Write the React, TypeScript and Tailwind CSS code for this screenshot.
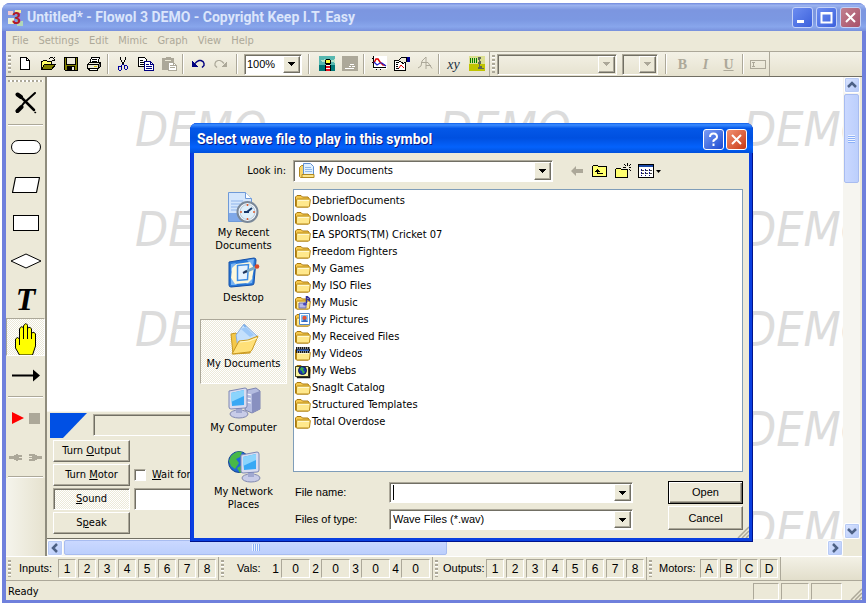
import { ReactNode, useState } from "react";
import clsx from "clsx";

const menus = ["File", "Settings", "Edit", "Mimic", "Graph", "View", "Help"];

const files = [
  { name: "DebriefDocuments", kind: "folder" },
  { name: "Downloads", kind: "folder" },
  { name: "EA SPORTS(TM) Cricket 07", kind: "folder" },
  { name: "Freedom Fighters", kind: "folder" },
  { name: "My Games", kind: "folder" },
  { name: "My ISO Files", kind: "folder" },
  { name: "My Music", kind: "music" },
  { name: "My Pictures", kind: "pictures" },
  { name: "My Received Files", kind: "folder" },
  { name: "My Videos", kind: "videos" },
  { name: "My Webs", kind: "webs" },
  { name: "SnagIt Catalog", kind: "folder" },
  { name: "Structured Templates", kind: "folder" },
  { name: "Total Overdose", kind: "folder" },
];

const digits = ["1", "2", "3", "4", "5", "6", "7", "8"];

const raised =
  "border border-t-white border-l-white border-r-[#716f64] border-b-[#716f64] shadow-[inset_-1px_-1px_0_#aca899] bg-[#ece9d8]";
const sunken =
  "border border-t-[#aca899] border-l-[#aca899] border-r-white border-b-white shadow-[inset_1px_1px_0_#716f64]";
const dither = "bg-[repeating-conic-gradient(#ffffff_0_25%,#ece9d8_0_50%)] bg-[length:2px_2px]";

/* ---------- small icons ---------- */

function Icon({ size = 16, children }: { size?: number; children: ReactNode }) {
  return (
    <svg width={size} height={size} viewBox={`0 0 ${size} ${size}`} shapeRendering="crispEdges" fill="none" aria-hidden="true">
      {children}
    </svg>
  );
}

const NewIcon = () => (
  <Icon>
    <path d="M3.5 1.5h6l3 3v9h-9z" fill="#fff" stroke="#000" />
    <path d="M9.5 1.5v3h3" stroke="#000" />
  </Icon>
);

const OpenIcon = () => (
  <Icon>
    <path d="M1.5 13.5v-8h1l1-1h3l1 1h4v3" fill="#ffff66" stroke="#000" />
    <path d="M1.5 13.5l3-5h11l-4 5z" fill="#808000" stroke="#000" />
    <path d="M9 2.5h1M10 1.5h3M13 2.5h1M14 3.5h1M12 4.5h3M14 1.5h1" stroke="#000" />
  </Icon>
);

const SaveIcon = () => (
  <Icon>
    <path d="M1.5 1.5h13v13h-12l-1-1z" fill="#808000" stroke="#000" />
    <path d="M4 2h8v6H4z" fill="#ece9d8" />
    <path d="M3.5 2v6.500h9V2" stroke="#000" />
    <path d="M4 10h8v4H4z" fill="#000" />
    <path d="M9 11h2v3H9z" fill="#ece9d8" />
  </Icon>
);

const PrintIcon = () => (
  <Icon>
    <path d="M5.500 1.500h8l-2 6h-8z" fill="#fff" stroke="#000" />
    <path d="M6 3.500h5M5.500 5.500h5" stroke="#000" />
    <path d="M1.500 8.500l2-2h11l-2 2z" fill="#ece9d8" stroke="#000" />
    <path d="M1.500 8.500h11v4h-11z" fill="#ece9d8" stroke="#000" />
    <path d="M12.500 8.500l2-2v4l-2 2" fill="#808080" stroke="#000" />
    <path d="M2.500 12.500h9v2h-8z" fill="#fff" stroke="#000" />
    <path d="M8 10.500h3" stroke="#d8c800" />
  </Icon>
);

const CutIcon = () => (
  <Icon>
    <path d="M5.500 1v3M6.500 4v2M7.500 6v2M10.500 1v3M9.500 4v2M8.500 6v2" stroke="#000" />
    <path d="M7 8.500h2M6.500 9v2M9.500 9v1" stroke="#000080" />
    <path d="M3.500 10.500h2l1 1v2l-1 1h-1l-1-1zM9.500 9.500h2l1 1v2l-1 1h-1l-1-1z" stroke="#0000a0" />
  </Icon>
);

const CopyIcon = () => (
  <Icon>
    <path d="M.5 1.500h6l2 2v7h-8z" fill="#fff" stroke="#000" />
    <path d="M2 4.500h3M2 6.500h4M2 8.500h4" stroke="#000" />
    <path d="M6.500 5.500h6l3 3v6h-9z" fill="#fff" stroke="#000080" />
    <path d="M12.500 5.500v3h3M8 8.500h3M8 10.500h6M8 12.500h6" stroke="#000080" />
  </Icon>
);

const PasteIcon = () => (
  <Icon>
    <path d="M1 2h3l1-1h4l1 1h3v5H7v7H1z" fill="#aca899" />
    <path d="M4 4.500h6" stroke="#ece9d8" />
    <path d="M7.500 6.500h5l3 3v5h-8z" fill="#fff" stroke="#aca899" />
    <path d="M9 9.500h3M9 11.500h5M12.500 7v2.500h3" stroke="#aca899" />
  </Icon>
);

const UndoIcon = () => (
  <Icon>
    <path d="M2 5v6h6z" fill="#000080" />
    <path d="M5 7.500l2-2 2-1h2l2 1 1 2v2l-2 2" stroke="#000080" strokeWidth="1.400" shapeRendering="auto" />
  </Icon>
);

const RedoIcon = () => (
  <Icon>
    <path d="M14 5v6H8z" fill="#aca899" />
    <path d="M11 7.500l-2-2-2-1H5l-2 1-1 2v2l2 2" stroke="#aca899" strokeWidth="1.200" shapeRendering="auto" />
  </Icon>
);

const LighthouseIcon = () => (
  <Icon>
    <path d="M0 0h16v9H0z" fill="#58b8b0" />
    <path d="M0 9h16v6H0z" fill="#007878" />
    <path d="M0 5l6-2v3zM16 3l-5 2 5 2z" fill="#b8e4c8" />
    <path d="M7 3h4v1h1v4h-1v1h1v6H6V9h1V8H6V4h1z" fill="#000" />
    <path d="M7 4h4v3H7z" fill="#ffff40" />
    <path d="M7 9h4v1H7zM7 12h4v1H7z" fill="#fff" />
    <path d="M7 10h4v2H7zM7 13h4v2H7z" fill="#e01020" />
  </Icon>
);

const MimicOffIcon = () => (
  <Icon>
    <path d="M0 0h16v15H0z" fill="#aca899" />
    <path d="M8 8.500h4M7 10.500h2M3 12.500h9M10 10.500h3" stroke="#fff" />
  </Icon>
);

const ChartIcon = () => (
  <Icon>
    <path d="M2 0h14v13H2z" fill="#fff" />
    <path d="M2.500 0v12M1 2.500h1M1 6.500h1M2 11.500h13M5 13.500h1M9 13.500h1" stroke="#000" />
    <path d="M3 7l2-4h2l2 3 3 3h2" stroke="#e00000" strokeWidth="1.500" shapeRendering="auto" />
    <path d="M3 6l3 3 3-2h2l4 3" stroke="#2020d0" strokeWidth="1.200" shapeRendering="auto" />
  </Icon>
);

const ChartSettingsIcon = () => (
  <Icon>
    <path d="M.5 4.500h11v10H.5z" fill="#fff" stroke="#000" />
    <path d="M2 6.500h3M2 8.500h2M2 10.500h2M2 12.500h3" stroke="#000" />
    <path d="M5 12l2-3 3 3" stroke="#e00000" shapeRendering="auto" />
    <path d="M4.500 4.500l3-3h5v4l-3 2-2-1z" fill="#ece9d8" stroke="#000" />
    <path d="M13 1h3v5h-3z" fill="#000090" />
  </Icon>
);

const CurveIcon = () => (
  <Icon>
    <path d="M1 12l3-2 1-5 4-4v12M4 6.500h7l4 6M9 9.500h5" stroke="#aca899" shapeRendering="auto" />
  </Icon>
);

const BeamIcon = () => (
  <Icon>
    <path d="M0 0h16v15H0z" fill="#c0c400" />
    <path d="M0 0h16v8H0z" fill="#dcdf90" />
    <path d="M1 2h1v5H1zM3 2h1v5H3zM5 2h1v5H5zM7 2h1v5H7z" fill="#008000" />
    <path d="M9 1h3v2h-1v2h1v3h-1v2h2v2h2v1h-6v-2h1V8H9V6h1V4H9z" fill="#606858" />
  </Icon>
);

const BoxIcon = () => (
  <Icon>
    <path d="M.5 4.500h15v8H.5z" stroke="#aca899" />
    <path d="M2 6.500h3M3.500 6v5M2 10.500h3" stroke="#aca899" />
  </Icon>
);

function FileIcon({ kind }: { kind: string }) {
  return (
    <svg width="16" height="16" viewBox="0 0 16 16" fill="none" className="shrink-0" aria-hidden="true">
      <path d="M.5 3L2 1.500h4l1.500 1.500h5.500l1 1.500v7.500l-1 1h-11.500l-1-1z" fill="#f5c84c" stroke="#a87810" />
      <path d="M2.500 5h12q1 0 .8 1l-.8 6q0 1-1 1h-11q-1 0-1-1V6q0-1 1-1z" fill="#ffe88c" stroke="#b88a18" />
      <path d="M3 6.500h11" stroke="#fff8d0" />
      {kind === "music" && (
        <>
          <path d="M4 7h7v5H4z" fill="#b8b8e8" stroke="#7070b0" />
          <path d="M11.500 7V0l3 2.500v2l-2-1.500" stroke="#303098" strokeWidth="1.500" />
          <ellipse cx="10" cy="8" rx="2" ry="1.500" fill="#4848b8" />
        </>
      )}
      {kind === "pictures" && (
        <>
          <path d="M4.500.5h10v11h-10z" fill="#fff" stroke="#5588c8" />
          <path d="M6 2h7v7H6z" fill="#7cc0f8" />
          <circle cx="9.500" cy="5" r="2.200" fill="#e85030" />
          <path d="M6 9l4-3 3 3z" fill="#3868c0" />
        </>
      )}
      {kind === "videos" && (
        <>
          <path d="M1 0h14v6H1z" fill="#181818" />
          <path d="M2 1h13M2 5h13" stroke="#fff" strokeDasharray="1 1" />
          <path d="M2 2.500h12v1.500H2z" fill="#3868c8" />
        </>
      )}
      {kind === "webs" && (
        <>
          <path d="M.5 2.500h13v10H.5z" fill="#f8f4a0" stroke="#404020" />
          <path d="M14.500 3v10.500H2" stroke="#181818" strokeWidth="1.500" />
          <circle cx="7.500" cy="6.500" r="4" fill="#1838b0" stroke="#101858" />
          <path d="M6 3l3 1-1 2 2 2-2 2-1-3-2-1z" fill="#38b048" />
        </>
      )}
    </svg>
  );
}

/* ---------- places bar icons ---------- */

const RecentIcon = () => (
  <svg width="32" height="32" viewBox="0 0 32 32" fill="none" aria-hidden="true">
    <path d="M.5.5h17l6 6v23H.5z" fill="#d4e6fc" stroke="#6f9ad8" />
    <path d="M1 21h15v8H1z" fill="#7fa8e8" />
    <path d="M17.500.5v6h6" fill="#fff" stroke="#6f9ad8" />
    <path d="M3 9h12M3 12h9M3 15h7M3 18h6" stroke="#8fb4ea" />
    <circle cx="19.500" cy="20" r="10" fill="#f4f8fc" stroke="#7a8898" strokeWidth="2" />
    <circle cx="19.500" cy="20" r="7.500" fill="#e0f0fa" stroke="#b8c8d8" />
    <path d="M19 20l5-4M16 20h5" stroke="#183868" strokeWidth="2" />
    <path d="M19.500 12v2M19.500 26v2M12 20h2M25 20h2" stroke="#e06030" strokeWidth="1.500" />
  </svg>
);

const DesktopIcon = () => (
  <svg width="32" height="32" viewBox="0 0 32 32" fill="none" aria-hidden="true">
    <path d="M1 5L26 1q2 0 2 2l-2 23q0 2-2 2L3 30q-2 0-2-2z" fill="#2878d8" stroke="#1450a8" />
    <path d="M3 7l5-1-5 9zM19 3l7-1-1 8zM3 21l6 7H3zM25 20l-1 6-6 1z" fill="#78b4f4" />
    <path d="M8 7l14-2 4 6-2 11-4 4-13 1-4-6 1-10z" fill="#fdf8dc" />
    <path d="M9.500 8.500l11-1-1 15-10 1z" fill="#e4f2ff" stroke="#3c8ce4" strokeWidth="1.500" />
    <path d="M17 15l11-5" stroke="#78a8c8" strokeWidth="3" />
    <path d="M15 16l4-2" stroke="#203860" strokeWidth="2" />
    <circle cx="29" cy="9.500" r="2.300" fill="#d84828" />
  </svg>
);

const DocumentsIcon = () => (
  <svg width="32" height="32" viewBox="0 0 32 32" fill="none" aria-hidden="true">
    <path d="M3 11l5-1 3 3 13 6-2 11-17 1z" fill="#f4c848" stroke="#c89820" />
    <path d="M8 12L16 1l13 12-9 10-10 2z" fill="#c4e0fc" stroke="#8cb0e0" />
    <path d="M13 6l5-2 8 8-4 2z" fill="#9cc8f8" />
    <path d="M15 2l2 2 1-1z" fill="#3888e0" />
    <path d="M4 31l7-13 9-1 10-4-6 14q-1 2-3 2z" fill="#ffe078" stroke="#c89820" />
    <path d="M12 19l9-1 8-3" stroke="#fff8c8" />
  </svg>
);

const MonitorArt = () => (
  <>
    <ellipse cx="12" cy="27" rx="9" ry="4" fill="#c8cce8" stroke="#8088b0" />
    <path d="M9 20h6v6H9z" fill="#a0a8d0" />
    <path d="M2 4l16-3q2 0 2 2v16q0 2-2 2L4 22q-2 0-2-2z" fill="#d8dcf0" stroke="#7c86b4" />
    <path d="M4 6l13-3v15L5 19z" fill="#38a8f4" />
    <path d="M4 6l13-3v6L4 15z" fill="#8cd4fc" />
  </>
);

const ComputerIcon = () => (
  <svg width="34" height="32" viewBox="0 0 34 32" fill="none" aria-hidden="true">
    <path d="M20 3l9-2 4 3v18l-8 4-7-3z" fill="#b4bce0" stroke="#7c84b0" />
    <path d="M25 7l8-3v18l-8 4z" fill="#8890c0" />
    <path d="M20 7l4 1M20 11l4 1M20 15l4 1" stroke="#fff" />
    <MonitorArt />
  </svg>
);

const NetworkIcon = () => (
  <svg width="34" height="32" viewBox="0 0 34 32" fill="none" aria-hidden="true">
    <circle cx="12" cy="11" r="10.500" fill="#2068d8" stroke="#184890" />
    <path d="M4 5q6-6 11-4l-2 5-4 2 3 4-4 6-4-3-2-5zM10 17l5-3 2 5-4 3z" fill="#48b848" />
    <g transform="translate(12 0)">
      <MonitorArt />
    </g>
  </svg>
);

/* ---------- shared controls ---------- */

function ToolButton({ label, children }: { label: string; children: ReactNode }) {
  return (
    <button aria-label={label} className="flex h-[22px] w-[23px] shrink-0 items-center justify-center">
      {children}
    </button>
  );
}

function Sep() {
  return (
    <div className="flex w-[6px] shrink-0 justify-center self-stretch py-[2px]">
      <div className="w-[2px] border-l border-[#aca899] bg-white" />
    </div>
  );
}

function Grip() {
  return <div className="mx-[2px] my-[3px] w-[3px] shrink-0 self-stretch bg-[repeating-linear-gradient(#aca899_0_2px,#fff_2px_3px,#ece9d8_3px_4px)]" />;
}

function Arrow({ disabled }: { disabled?: boolean }) {
  return (
    <span className={clsx("pointer-events-none flex w-[17px] shrink-0 items-center justify-center", raised)}>
      <svg width="7" height="4" viewBox="0 0 7 4" shapeRendering="crispEdges" aria-hidden="true">
        <path d="M0 0h7L3.500 4z" fill={disabled ? "#aca899" : "#000"} />
      </svg>
    </span>
  );
}

function CaptionButton({ label, tone, children }: { label: string; tone: string; children: ReactNode }) {
  return (
    <button aria-label={label} className={clsx("flex size-[21px] items-center justify-center rounded-[3px] border", tone)}>
      <svg width="17" height="17" viewBox="0 0 17 17" fill="none" stroke="#fff" strokeWidth="2" aria-hidden="true">
        {children}
      </svg>
    </button>
  );
}

function Cell({ children, wide }: { children: ReactNode; wide?: boolean }) {
  return (
    <span
      className={clsx(
        "flex h-[19px] items-center justify-center border border-b-white border-l-[#aca899] border-r-white border-t-[#aca899]",
        wide ? "w-[29px]" : "w-[18px]"
      )}
    >
      {children}
    </span>
  );
}

function ScrollButton({ label, d }: { label: string; d: string }) {
  return (
    <button
      aria-label={label}
      className="flex size-[16px] shrink-0 items-center justify-center rounded-[2px] border border-white bg-gradient-to-br from-[#dbe5ff] to-[#b4c8f8] shadow-[inset_0_0_0_1px_#b8cbf6]"
    >
      <svg width="10" height="10" viewBox="0 0 10 10" fill="none" stroke="#4d6185" strokeWidth="2.500" aria-hidden="true">
        <path d={d} />
      </svg>
    </button>
  );
}

/* ---------- main window pieces ---------- */

function Toolbar() {
  return (
    <div className="flex h-[26px] shrink-0 items-center border-b border-t border-b-[#716f64] border-t-[#aca899] bg-gradient-to-b from-[#f3f1e6] to-[#e6e2cf]">
      <Grip />
      <ToolButton label="New"><NewIcon /></ToolButton>
      <ToolButton label="Open"><OpenIcon /></ToolButton>
      <ToolButton label="Save"><SaveIcon /></ToolButton>
      <ToolButton label="Print"><PrintIcon /></ToolButton>
      <Sep />
      <ToolButton label="Cut"><CutIcon /></ToolButton>
      <ToolButton label="Copy"><CopyIcon /></ToolButton>
      <ToolButton label="Paste"><PasteIcon /></ToolButton>
      <Sep />
      <ToolButton label="Undo"><UndoIcon /></ToolButton>
      <ToolButton label="Redo"><RedoIcon /></ToolButton>
      <div className="w-[2px] shrink-0" />
      <Sep />
      <div className={clsx("mx-[4px] flex h-[21px] w-[58px] shrink-0 bg-white p-px", sunken)}>
        <select aria-label="Zoom" className="min-w-0 flex-1 appearance-none pl-px font-['Liberation_Sans',sans-serif] text-[11px]">
          <option>100%</option>
        </select>
        <Arrow />
      </div>
      <Sep />
      <div className="w-[3px] shrink-0" />
      <ToolButton label="Show mimic"><LighthouseIcon /></ToolButton>
      <ToolButton label="Hide mimic"><MimicOffIcon /></ToolButton>
      <Sep />
      <ToolButton label="Graph"><ChartIcon /></ToolButton>
      <ToolButton label="Graph settings"><ChartSettingsIcon /></ToolButton>
      <ToolButton label="Curve"><CurveIcon /></ToolButton>
      <Sep />
      <ToolButton label="Variables">
        <span className="font-['Liberation_Serif',serif] text-[14px] italic text-[#203040]">xy</span>
      </ToolButton>
      <ToolButton label="Signals"><BeamIcon /></ToolButton>
      <div className="ml-px w-px self-stretch bg-[#aca899]" />
      <Grip />
      <div className={clsx("flex h-[21px] w-[120px] shrink-0 p-px", sunken)}>
        <select aria-label="Font" disabled className="min-w-0 flex-1 appearance-none" />
        <Arrow disabled />
      </div>
      <div className={clsx("ml-[5px] flex h-[21px] w-[36px] shrink-0 p-px", sunken)}>
        <select aria-label="Font size" disabled className="min-w-0 flex-1 appearance-none" />
        <Arrow disabled />
      </div>
      <div className="w-[5px] shrink-0" />
      <Sep />
      <div className="flex pl-[2px] font-['Liberation_Serif',serif] text-[14px] font-bold text-[#aca899]">
        <ToolButton label="Bold">B</ToolButton>
        <ToolButton label="Italic"><i>I</i></ToolButton>
        <ToolButton label="Underline"><u>U</u></ToolButton>
      </div>
      <Sep />
      <ToolButton label="Text box"><BoxIcon /></ToolButton>
      <div className="w-px self-stretch bg-[#aca899]" />
    </div>
  );
}

function SideTool({ label, active, children }: { label: string; active?: boolean; children: ReactNode }) {
  return (
    <button
      aria-label={label}
      className={clsx(
        "flex h-[38px] w-full shrink-0 justify-center border",
        active
          ? clsx("items-end border-b-white border-l-[#aca899] border-r-white border-t-[#aca899]", dither)
          : "items-center border-transparent"
      )}
    >
      {children}
    </button>
  );
}

function SideTools() {
  return (
    <div className="flex w-[41px] shrink-0 flex-col border-r-2 border-[#8f8c7d] bg-[#ece9d8]">
      <div className="mx-[2px] mt-[3px] h-[2px] shrink-0 bg-[repeating-linear-gradient(90deg,#aca899_0_2px,#fff_2px_4px)]" />
      <div className="flex h-[42px] shrink-0 items-center justify-center">
        <svg width="22" height="22" viewBox="0 0 22 22" fill="none" stroke="#000" strokeLinecap="round" aria-hidden="true">
          <path d="M2.500 2.500L6 5" strokeWidth="4" />
          <path d="M4 3l12 12 3 3" strokeWidth="2.500" />
          <path d="M20 1L9 11l-7 9" strokeWidth="2" />
          <path d="M2.500 19l4-4" strokeWidth="4" />
          <path d="M20 20.500h.5" strokeWidth="1.500" />
        </svg>
      </div>
      <div className="mx-[2px] mb-[2px] h-[2px] shrink-0 border-t border-[#aca899] bg-white" />
      <SideTool label="Start or stop">
        <svg width="32" height="16" viewBox="0 0 32 16" aria-hidden="true"><rect x="1.500" y="1.500" width="29" height="13" rx="6.500" fill="#fff" stroke="#000" /></svg>
      </SideTool>
      <SideTool label="Output">
        <svg width="30" height="18" viewBox="0 0 30 18" aria-hidden="true"><path d="M4.500 1.500h24l-3 15h-24z" fill="#fff" stroke="#000" strokeWidth="1.200" strokeLinejoin="round" /></svg>
      </SideTool>
      <SideTool label="Process">
        <svg width="28" height="18" viewBox="0 0 28 18" aria-hidden="true"><rect x="1.500" y="1.500" width="25" height="15" fill="#fff" stroke="#000" /></svg>
      </SideTool>
      <SideTool label="Decision">
        <svg width="32" height="16" viewBox="0 0 32 16" aria-hidden="true"><path d="M1 8L16 1l15 7-15 7z" fill="#fff" stroke="#000" /></svg>
      </SideTool>
      <SideTool label="Text">
        <span className="font-['Liberation_Serif',serif] text-[32px] font-bold italic leading-none text-black">T</span>
      </SideTool>
      <SideTool label="Move" active>
        <svg width="24" height="33" viewBox="0 0 24 33" aria-hidden="true">
          <path
            d="M5.500 33L1.500 26V17q2-3 4 0v3V7q2-4 4-1V4q2-4 4-1 0 0 0 3 3-2 4 1v4q3-2 4 1v12l-3 9z"
            fill="#ff0"
            stroke="#000"
          />
          <path d="M9.500 6v11M13.500 5v12M17.500 9v8M5.500 19v4" stroke="#000" />
        </svg>
      </SideTool>
      <SideTool label="Connect">
        <svg width="30" height="13" viewBox="0 0 30 13" aria-hidden="true"><path d="M1 5.500h21v-5l7 6-7 6v-5H1z" /></svg>
      </SideTool>
      <div className="mx-[2px] mt-[2px] h-[2px] shrink-0 border-t border-[#aca899] bg-white" />
      <div className="flex h-[40px] shrink-0 items-center justify-center gap-[5px]">
        <button aria-label="Run">
          <svg width="12" height="12" viewBox="0 0 12 12" aria-hidden="true"><path d="M0 0l12 6-12 6z" fill="#f00" /></svg>
        </button>
        <button aria-label="Stop" className="size-[11px] bg-[#aca899]" />
      </div>
      <div className="flex h-[38px] shrink-0 items-center justify-center gap-[5px]">
        <button aria-label="Connect interface">
          <svg width="14" height="9" viewBox="0 0 14 9" shapeRendering="crispEdges" aria-hidden="true"><path d="M0 3h5V2h2V1h2v1h4v2h-3v1h3v2H9v1H7V7H5V6H0z" fill="#aca899" /></svg>
        </button>
        <button aria-label="Disconnect interface">
          <svg width="14" height="9" viewBox="0 0 14 9" shapeRendering="crispEdges" aria-hidden="true"><path d="M1 1h6v1h2v1h5v3H9v1H7v1H1V6h3V5H1V4h3V3H1z" fill="#aca899" /></svg>
        </button>
      </div>
      <div className="mx-[2px] h-[2px] shrink-0 border-t border-[#aca899] bg-white" />
      <div className="flex-1 bg-gradient-to-r from-[#f5f4ec] to-[#e6e2cf]" />
    </div>
  );
}

function SymbolPanel() {
  const [wait, setWait] = useState(false);
  const button = "h-[22px] w-[77px] text-center text-black";
  return (
    <div className="absolute bottom-0 left-0 flex h-[128px] w-[640px] max-w-[85%] flex-col border-b border-t border-b-[#716f64] border-t-[#f8f7f0] bg-[#ece9d8]">
      <div className="flex h-[28px] shrink-0 items-start gap-[5px] pl-[3px] pt-px">
        <svg width="38" height="25" viewBox="0 0 38 25" aria-hidden="true"><path d="M0 0h37L13 25H0z" fill="#0050e4" /></svg>
        <div className={clsx("mt-px h-[22px] flex-1", sunken)} />
      </div>
      <div className="flex gap-[4px] pl-[6px]">
        <div className="flex flex-col gap-[2px]">
          <button className={clsx(button, raised)}>Turn <u>O</u>utput</button>
          <button className={clsx(button, raised)}>Turn <u>M</u>otor</button>
          <button className={clsx(button, sunken, dither)}><u>S</u>ound</button>
          <button className={clsx(button, raised)}>S<u>p</u>eak</button>
        </div>
        <div className="flex flex-1 flex-col gap-[2px] pt-[24px]">
          <label className="flex h-[22px] items-center gap-[6px] whitespace-nowrap">
            <input
              type="checkbox"
              checked={wait}
              onChange={(e) => setWait(e.target.checked)}
              className={clsx("size-[12px] appearance-none bg-white checked:bg-[#808080]", sunken)}
            />
            <span><u>W</u>ait for sound</span>
          </label>
          <input aria-label="Sound file" className={clsx("h-[22px] w-full bg-white", sunken)} />
        </div>
      </div>
    </div>
  );
}

function Workspace() {
  return (
    <div className="flex min-h-0 min-w-0 flex-1 flex-col">
      <div className="flex min-h-0 flex-1">
        <div className="relative min-w-0 flex-1 overflow-hidden bg-white">
          <div className="grid auto-rows-[100px] grid-cols-[304px_304px_304px] pl-[88px] pt-[24px] text-[48px] italic leading-[56px] text-[#dcdcdc]">
            {Array.from({ length: 15 }, (_, i) => (
              <span key={i}>DEMO</span>
            ))}
          </div>
          <SymbolPanel />
        </div>
        <div className="flex w-[17px] shrink-0 flex-col items-center bg-[#f6f5f0]">
          <ScrollButton label="Scroll up" d="M1 7l4-4 4 4" />
          <div className="mt-px flex h-[89px] w-[15px] flex-col items-center justify-center rounded-[2px] border border-[#a8bcf0] bg-gradient-to-r from-[#cad8ff] to-[#bccffc]">
            <div className="h-[8px] w-[7px] bg-[repeating-linear-gradient(#eef4ff_0_1px,#8cb0f8_1px_2px)]" />
          </div>
          <div className="flex-1" />
          <ScrollButton label="Scroll down" d="M1 3l4 4 4-4" />
        </div>
        <div className="w-[2px] shrink-0 bg-[#ece9d8]" />
      </div>
      <div className="flex h-[17px] shrink-0 items-center bg-[#f6f5f0]">
        <ScrollButton label="Scroll left" d="M7 1L3 5l4 4" />
        <div className="ml-px flex h-[15px] w-[47%] items-center justify-center rounded-[2px] border border-[#a8bcf0] bg-gradient-to-b from-[#cad8ff] to-[#bccffc]">
          <div className="h-[7px] w-[8px] bg-[repeating-linear-gradient(90deg,#eef4ff_0_1px,#8cb0f8_1px_2px)]" />
        </div>
        <div className="flex-1" />
        <ScrollButton label="Scroll right" d="M3 1l4 4-4 4" />
        <div className="h-full w-[19px] bg-[#ece9d8]" />
      </div>
    </div>
  );
}

function PortBar() {
  return (
    <div className="flex h-[25px] shrink-0 items-center border-b border-t border-b-[#aca899] border-t-white bg-[#ece9d8] font-['Liberation_Sans',sans-serif] text-[11px]">
      <Grip />
      <span className="w-[45px] shrink-0 pl-[6px]">Inputs:</span>
      <div className="flex gap-[2px] text-[12px]">
        {digits.map((d) => <Cell key={d}>{d}</Cell>)}
      </div>
      <div className="ml-[2px] w-px self-stretch bg-[#aca899]" />
      <Grip />
      <span className="w-[44px] shrink-0 pl-[11px]">Vals:</span>
      <div className="flex text-[12px]">
        {digits.slice(0, 4).map((d) => (
          <span key={d} className="flex items-center">
            <span className="w-[11px] pr-[2px] text-right">{d}</span>
            <Cell wide>0</Cell>
          </span>
        ))}
      </div>
      <div className="ml-[2px] w-px self-stretch bg-[#aca899]" />
      <Grip />
      <span className="w-[45px] shrink-0 pl-[3px]">Outputs:</span>
      <div className="flex gap-[2px] pl-px text-[12px]">
        {digits.map((d) => <Cell key={d}>{d}</Cell>)}
      </div>
      <div className="ml-[2px] w-px self-stretch bg-[#aca899]" />
      <Grip />
      <span className="w-[46px] shrink-0 pl-[5px]">Motors:</span>
      <div className="flex gap-[2px] text-[12px]">
        {["A", "B", "C", "D"].map((d) => <Cell key={d}>{d}</Cell>)}
      </div>
      <div className="ml-[2px] w-px self-stretch bg-[#aca899]" />
      <div className="flex-1 self-stretch bg-gradient-to-b from-[#f3f1e6] to-[#e2decb]" />
    </div>
  );
}

function ResizeGrip() {
  return (
    <svg width="12" height="12" viewBox="0 0 12 12" fill="none" stroke="#aca899" strokeWidth="1.500" aria-hidden="true">
      <path d="M1 12L12 1M5 12l7-7M9 12l3-3" />
    </svg>
  );
}

function StatusBar() {
  const box = "h-[17px] border border-b-white border-l-[#aca899] border-r-white border-t-[#aca899]";
  return (
    <div className="flex h-[19px] shrink-0 items-end gap-[2px] bg-[#ece9d8] pl-[2px]">
      <span className="flex-1">Ready</span>
      <span className={clsx(box, "w-[26px]")} />
      <span className={clsx(box, "w-[28px]")} />
      <span className={clsx(box, "w-[31px]")} />
      <span className="flex w-[18px] justify-end"><ResizeGrip /></span>
    </div>
  );
}

/* ---------- dialog ---------- */

function Place({ label, active, className, children }: { label: string; active?: boolean; className: string; children: ReactNode }) {
  return (
    <button
      className={clsx(
        "flex w-full flex-col items-center border text-center leading-[13px]",
        active ? clsx("border-b-white border-l-[#aca899] border-r-white border-t-[#aca899]", dither) : "border-transparent",
        className
      )}
    >
      {children}
      <span className="mt-[2px] whitespace-pre-line">{label}</span>
    </button>
  );
}

function OpenDialog() {
  const [fileName, setFileName] = useState("");
  return (
    <div
      role="dialog"
      aria-label="Select wave file to play in this symbol"
      className="absolute left-[188px] top-[120px] flex h-[419px] w-[563px] flex-col rounded-t-[7px] bg-[#0a3fe0] px-[4px] pb-[4px] shadow-[inset_-1px_-1px_0_#00138c,inset_1px_0_0_#0831d9]"
    >
      <div className="-mx-[4px] flex h-[30px] shrink-0 items-center justify-between rounded-t-[7px] bg-[linear-gradient(#0a5ce8_0%,#3c8cff_6%,#0458e8_18%,#0050e0_50%,#0462fc_80%,#0050dc_100%)] pl-[7px] pr-[6px] pt-[3px]">
        <span className="font-['Roboto',sans-serif] text-[14px] font-bold text-white [text-shadow:1px_1px_0_#0a1883]">
          Select wave file to play in this symbol
        </span>
        <div className="flex gap-[2px]">
          <CaptionButton label="Help" tone="border-white bg-gradient-to-br from-[#7c9cf4] to-[#1c48d0]">
            <path d="M5 6q0-3.500 3.500-3.500T12 6q0 1.500-2 2.500T8.500 11M8.500 12.500v2.500" />
          </CaptionButton>
          <CaptionButton label="Close" tone="border-white bg-gradient-to-br from-[#f09070] to-[#c83408]">
            <path d="M4 4l9 9M13 4l-9 9" />
          </CaptionButton>
        </div>
      </div>

      <div className="flex min-h-0 flex-1 flex-col bg-[#ece9d8]">
        {/* Look in */}
        <div className="flex h-[36px] shrink-0 items-center">
          <label htmlFor="look-in" className="w-[99px] pr-[7px] text-right">Look in:</label>
          <div className={clsx("flex h-[22px] w-[260px] bg-white p-px", sunken)}>
            <span className="flex w-[24px] items-center justify-center">
              <svg width="16" height="16" viewBox="0 0 16 16" fill="none" aria-hidden="true">
                <path d="M.5 4.500l2-2h3v12h-4l-1-1z" fill="#f8d468" stroke="#b08820" />
                <path d="M4.500.5h7l3 3v9h-10z" fill="#e0f0ff" stroke="#6090d0" />
                <path d="M6 4.500h6M6 6.500h7M6 8.500h7" stroke="#90b8e8" />
                <path d="M3 11.500h12v3H3z" fill="#fce488" stroke="#b08820" />
              </svg>
            </span>
            <select id="look-in" className="min-w-0 flex-1 appearance-none">
              <option>My Documents</option>
            </select>
            <Arrow />
          </div>
          <div className="flex pl-[12px]">
            <ToolButton label="Back">
              <svg width="12" height="10" viewBox="0 0 12 10" aria-hidden="true"><path d="M0 5l5-5v3h7v4H5v3z" fill="#aca899" /></svg>
            </ToolButton>
            <ToolButton label="Up one level">
              <Icon>
                <path d="M.5 13.500v-10l1-1h4l1 1h8v10z" fill="#ffff70" stroke="#000" />
                <path d="M5.500 11V6M3 8.500h5M4 7.500h3M5 10.500h6" stroke="#000" />
              </Icon>
            </ToolButton>
            <ToolButton label="New folder">
              <Icon>
                <path d="M.5 14.500v-8l1-1h4l1 1h6v8z" fill="#ffff70" stroke="#000" />
                <path d="M12.500 0v3M12.500 6v3M8 4.500h3M14 4.500h2M9 1l2 2M14 3l2-2M14 6l2 2" stroke="#000" />
                <path d="M12 4h1v1h-1z" fill="#fff" />
              </Icon>
            </ToolButton>
            <button aria-label="Views" className="flex h-[22px] w-[30px] items-center justify-center gap-[2px]">
              <Icon>
                <path d="M.5 1.500h15v13H.5z" fill="#fff" stroke="#000" />
                <path d="M1 2h14v2H1z" fill="#1848a8" />
                <path d="M3 6h1v2H3zM7 6h1v2H7zM11 6h1v2h-1zM3 9h1v2H3zM7 9h1v2H7zM11 9h1v2h-1zM3 12h1v1H3zM7 12h1v1H7zM11 12h1v1h-1z" fill="#101080" />
                <path d="M4 7.500h2M8 7.500h2M12 7.500h2M4 10.500h2M8 10.500h2M12 10.500h2" stroke="#404040" />
              </Icon>
              <svg width="5" height="3" viewBox="0 0 5 3" aria-hidden="true"><path d="M0 0h5L2.500 3z" /></svg>
            </button>
          </div>
        </div>

        <div className="flex min-h-0 flex-1 gap-[6px] pl-[6px] pr-[6px]">
          {/* Places */}
          <nav className="flex w-[87px] shrink-0 flex-col">
            <Place label={"My Recent\nDocuments"} className="h-[66px] pt-[2px]"><RecentIcon /></Place>
            <Place label="Desktop" className="h-[64px] pt-px"><DesktopIcon /></Place>
            <Place label="My Documents" active className="h-[65px] pt-[3px]"><DocumentsIcon /></Place>
            <Place label="My Computer" className="h-[64px] pt-[2px]"><ComputerIcon /></Place>
            <Place label={"My Network\nPlaces"} className="h-[66px] pt-[2px]"><NetworkIcon /></Place>
          </nav>

          <div className="flex min-w-0 flex-1 flex-col">
            <ul className="h-[283px] border border-[#7f9db9] bg-white pl-px pt-[3px]">
              {files.map((file) => (
                <li key={file.name} className="flex h-[17px] items-center gap-px">
                  <FileIcon kind={file.kind} />
                  {file.name}
                </li>
              ))}
            </ul>

            <div className="flex justify-between pl-[2px] pt-[9px] font-['Liberation_Sans',sans-serif] text-[11px]">
              <div className="grid grid-cols-[94px_244px] content-start gap-y-[6px] pt-px">
                <label htmlFor="file-name" className="self-center">File name:</label>
                <div className={clsx("flex h-[21px] bg-white p-px", sunken)}>
                  <span className={clsx("my-px ml-[2px] w-px", fileName === "" && "bg-black")} />
                  <input
                    id="file-name"
                    value={fileName}
                    onChange={(e) => setFileName(e.target.value)}
                    className="min-w-0 flex-1 outline-none"
                  />
                  <Arrow />
                </div>
                <label htmlFor="file-type" className="self-center">Files of type:</label>
                <div className={clsx("flex h-[21px] bg-white p-px", sunken)}>
                  <select id="file-type" className="min-w-0 flex-1 appearance-none pl-[2px]">
                    <option>Wave Files (*.wav)</option>
                  </select>
                  <Arrow />
                </div>
              </div>
              <div className="flex w-[75px] flex-col gap-[2px]">
                <button className="h-[23px] border border-black bg-[#ece9d8] shadow-[inset_1px_1px_0_#fff,inset_-1px_-1px_0_#716f64,inset_-2px_-2px_0_#aca899]">Open</button>
                <button className={clsx("h-[24px]", raised)}>Cancel</button>
              </div>
            </div>
          </div>
        </div>
      </div>
      <span className="pointer-events-none absolute bottom-[4px] right-[4px]"><ResizeGrip /></span>
    </div>
  );
}

export default function App() {
  return (
    <div className="h-screen min-h-[560px] overflow-hidden bg-white pl-[2px] pt-[3px] font-['DejaVu_Sans_Condensed','DejaVu_Sans',sans-serif] text-[11px] text-black">
      <div className="relative flex h-full flex-col overflow-hidden rounded-t-[8px] bg-[#6f80dc] px-[4px] pb-[3px]">
        {/* Title bar */}
        <div className="-mx-[4px] flex h-[28px] shrink-0 items-center justify-between bg-[linear-gradient(#7088dc_0%,#9cb4f0_8%,#7c96e0_25%,#7c98e2_60%,#88a6ec_85%,#7890dc_100%)] pl-[5px] pr-[5px] pt-px">
          <div className="flex items-center gap-[4px]">
            <svg width="16" height="18" viewBox="0 0 16 18" aria-hidden="true">
              <path d="M1 2h5v4H1z" fill="#f0c8d0" />
              <path d="M8 1h6v3H8z" fill="#f0e8a0" />
              <path d="M1 9h6v6H1z" fill="#e8f0d8" />
              <path d="M10 12h6v5h-6z" fill="#b0d8b8" />
              <text x="5" y="15" fontSize="16" fontWeight="bold" fill="#b01828" fontFamily="Liberation Sans">3</text>
            </svg>
            <span className="font-['Roboto',sans-serif] text-[14px] font-bold text-[#dbe5fb]">
              Untitled* - Flowol 3 DEMO - Copyright Keep I.T. Easy
            </span>
          </div>
          <div className="flex gap-[3px]">
            <CaptionButton label="Minimize" tone="border-[#c4d2f8] bg-gradient-to-br from-[#6c8cf0] to-[#3c60dc]">
              <path d="M3 12.500h7" strokeWidth="3" />
            </CaptionButton>
            <CaptionButton label="Maximize" tone="border-[#c4d2f8] bg-gradient-to-br from-[#6c8cf0] to-[#3c60dc]">
              <path d="M3.500 4v9.500h10V4zM3 4.500h11" />
            </CaptionButton>
            <CaptionButton label="Close window" tone="border-[#c4d2f8] bg-gradient-to-br from-[#c08090] to-[#a85068]">
              <path d="M4 4l9 9M13 4l-9 9" />
            </CaptionButton>
          </div>
        </div>

        <nav className="flex h-[20px] shrink-0 items-center gap-[10px] bg-[#ece9d8] pl-[6px] text-[#aca899]">
          {menus.map((menu) => (
            <button key={menu}>{menu}</button>
          ))}
        </nav>

        <Toolbar />
        <div className="flex min-h-0 flex-1">
          <SideTools />
          <Workspace />
        </div>
        <PortBar />
        <StatusBar />

        <OpenDialog />
      </div>
    </div>
  );
}
